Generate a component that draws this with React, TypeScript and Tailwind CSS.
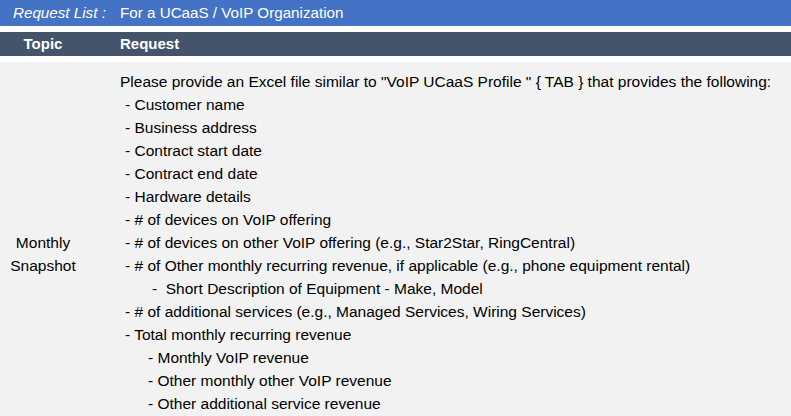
import React from 'react';

// Request list table: UCaaS / VoIP organization
const LINES: { text: string; indent: string }[] = [
  { text: 'Please provide an Excel file similar to "VoIP UCaaS Profile " { TAB } that provides the following:', indent: 'pl-0' },
  { text: '- Customer name', indent: 'pl-[5px]' },
  { text: '- Business address', indent: 'pl-[5px]' },
  { text: '- Contract start date', indent: 'pl-[5px]' },
  { text: '- Contract end date', indent: 'pl-[5px]' },
  { text: '- Hardware details', indent: 'pl-[5px]' },
  { text: '- # of devices on VoIP offering', indent: 'pl-[5px]' },
  { text: '- # of devices on other VoIP offering (e.g., Star2Star, RingCentral)', indent: 'pl-[5px]' },
  { text: '- # of Other monthly recurring revenue, if applicable (e.g., phone equipment rental)', indent: 'pl-[5px]' },
  { text: '-  Short Description of Equipment - Make, Model', indent: 'pl-[32px]' },
  { text: '- # of additional services (e.g., Managed Services, Wiring Services)', indent: 'pl-[5px]' },
  { text: '- Total monthly recurring revenue', indent: 'pl-[5px]' },
  { text: '- Monthly VoIP revenue', indent: 'pl-[28px]' },
  { text: '- Other monthly other VoIP revenue', indent: 'pl-[28px]' },
  { text: '- Other additional service revenue', indent: 'pl-[28px]' },
];

export default function App() {
  return (
    <div className="w-[791px] h-[416px] overflow-hidden bg-white font-['Liberation_Sans',Arial,sans-serif] text-[15.5px]">
      {/* Title bar */}
      <div className="h-[26px] bg-[#4472c4] text-white flex items-center text-[15.2px]">
        <span className="w-[120px] pl-[13px] italic">Request List :</span>
        <span>For a UCaaS / VoIP Organization</span>
      </div>

      {/* Column header */}
      <div className="mt-[6px] h-[24px] bg-[#44546a] text-white font-bold flex items-center text-[15px]">
        <span className="w-[86px] text-center">Topic</span>
        <span className="pl-[34px]">Request</span>
      </div>

      {/* Body row */}
      <div className="mt-[6px] bg-[#f2f2f2] text-black flex">
        <div className="w-[86px] flex flex-col justify-center items-center leading-[23px]">
          <span>Monthly</span>
          <span>Snapshot</span>
        </div>
        <div className="pl-[34px] pt-[8px] pb-[30px] leading-[23px]">
          {LINES.map((line, i) => (
            <div key={i} className={`${line.indent} whitespace-pre`}>
              {line.text}
            </div>
          ))}
        </div>
      </div>
    </div>
  );
}
